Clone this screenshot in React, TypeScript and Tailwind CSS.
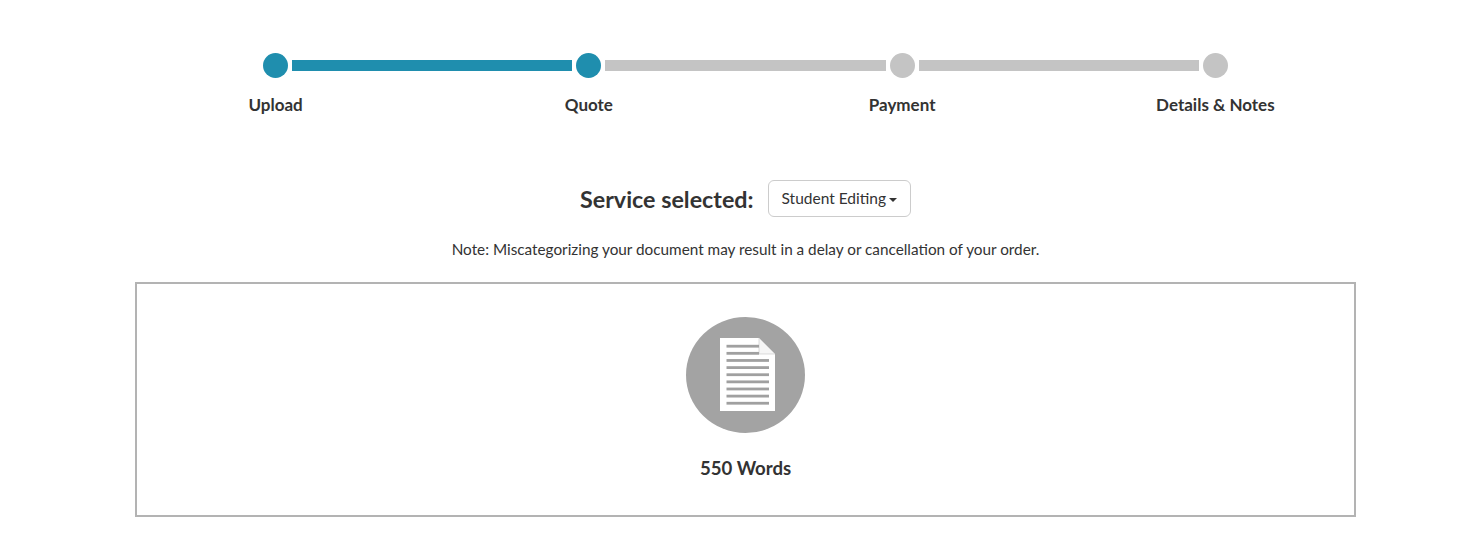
import React from "react";

const steps = ["Upload", "Quote", "Payment", "Details & Notes"];

function DocumentIcon() {
  const rows = [0, 1, 2, 3, 4, 5, 6, 7, 8];
  return (
    <svg width="119" height="116" viewBox="0 0 119 116">
      <ellipse cx="59.5" cy="58" rx="59.5" ry="58" fill="#a3a3a3" />
      <path d="M34 21H73L89 37V94H34Z" fill="#fff" />
      <path d="M73 21L89 37H73Z" fill="#f6f6f6" stroke="#c8c8c8" strokeWidth="0.6" />
      {rows.map((r) => (
        <rect
          key={r}
          x="40.5"
          y={27.8 + r * 7.13}
          width={r < 2 ? 32.5 : 42.5}
          height="2.8"
          fill="#a0a0a0"
        />
      ))}
    </svg>
  );
}

function Dot({ active }: { active: boolean }) {
  return (
    <span
      className={
        active
          ? "h-[25px] w-[25px] shrink-0 rounded-full bg-[#1f8eae]"
          : "h-[25px] w-[25px] shrink-0 rounded-full bg-[#c4c4c4]"
      }
    />
  );
}

function Stepper() {
  return (
    <div className="pt-[53px]">
      <div className="mx-auto flex w-[965px] items-center">
        <Dot active />
        <span className="mx-[4px] h-[11px] flex-1 bg-[#1f8eae]" />
        <Dot active />
        <span className="mx-[4px] h-[11px] flex-1 bg-[#c4c4c4]" />
        <Dot active={false} />
        <span className="mx-[4px] h-[11px] flex-1 bg-[#c4c4c4]" />
        <Dot active={false} />
      </div>
      <div className="mx-auto mt-[16px] grid w-[1253px] grid-cols-4">
        {steps.map((s) => (
          <div
            key={s}
            className="text-center text-[17px] leading-[22px] font-bold text-[#333]"
          >
            {s}
          </div>
        ))}
      </div>
    </div>
  );
}

export default function App() {
  return (
    <div className="h-[557px] bg-white pl-[9px] font-['Lato',sans-serif] text-[#333]">
      <Stepper />
      <div className="mt-[64px] flex items-center justify-center gap-[14px]">
        <h2 className="text-[23.3px] leading-[30px] font-bold text-[#333]">
          Service selected:
        </h2>
        <button className="flex h-[37px] items-center rounded-[6px] border border-[#ccc] bg-white px-[13px] text-[15.5px] text-[#333]">
          Student Editing
          <span className="ml-[3px] mt-[2px] h-0 w-0 border-x-[4px] border-t-[4px] border-x-transparent border-t-[#333]" />
        </button>
      </div>
      <p className="mt-[21px] text-center text-[15.3px] leading-[22px]">
        Note: Miscategorizing your document may result in a delay or cancellation of your order.
      </p>
      <div className="mx-auto mt-[22px] flex h-[235px] w-[1221px] flex-col items-center border-2 border-[#b3b3b3] pt-[33px]">
        <DocumentIcon />
        <div className="mt-[22px] text-[18.6px] leading-[26px] font-bold text-[#333]">
          550 Words
        </div>
      </div>
    </div>
  );
}
